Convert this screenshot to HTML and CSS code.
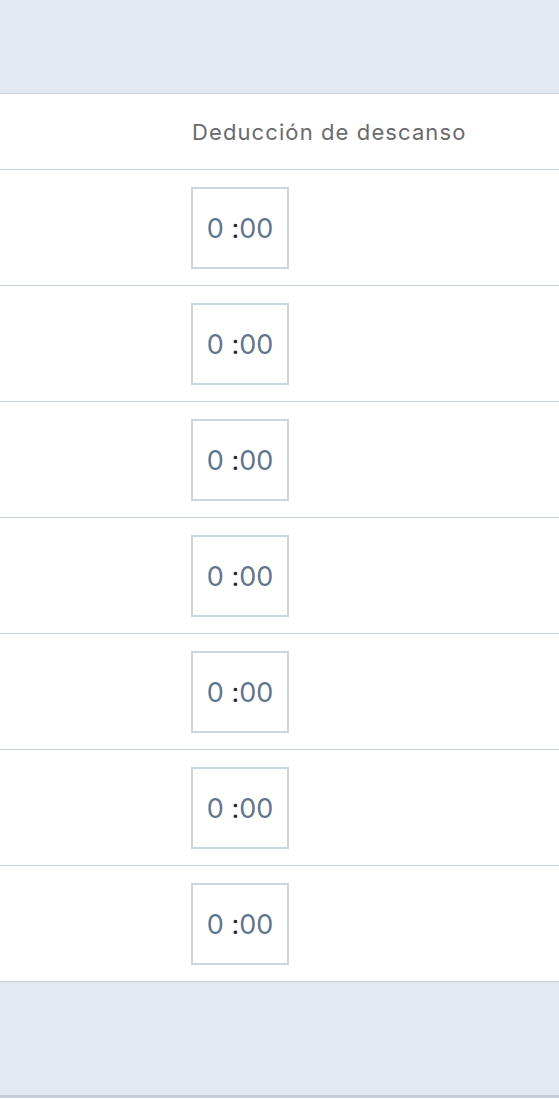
FILE: index.html
```html
<!DOCTYPE html>
<html lang="es">
<head>
<meta charset="UTF-8">
<meta name="viewport" content="width=device-width, initial-scale=1.0">
<title>Deducción de descanso</title>
<link rel="stylesheet" href="styles.css">
</head>
<body>

<div class="band band-top"></div>

<div class="table">
  <div class="row row-head">
    <div class="cell-spacer"></div>
    <div class="cell">Deducción de descanso</div>
  </div>
  <div class="row">
    <div class="cell-spacer"></div>
    <div class="cell"><div class="time-box">0 <span class="sep">:</span>00</div></div>
  </div>
  <div class="row">
    <div class="cell-spacer"></div>
    <div class="cell"><div class="time-box">0 <span class="sep">:</span>00</div></div>
  </div>
  <div class="row">
    <div class="cell-spacer"></div>
    <div class="cell"><div class="time-box">0 <span class="sep">:</span>00</div></div>
  </div>
  <div class="row">
    <div class="cell-spacer"></div>
    <div class="cell"><div class="time-box">0 <span class="sep">:</span>00</div></div>
  </div>
  <div class="row">
    <div class="cell-spacer"></div>
    <div class="cell"><div class="time-box">0 <span class="sep">:</span>00</div></div>
  </div>
  <div class="row">
    <div class="cell-spacer"></div>
    <div class="cell"><div class="time-box">0 <span class="sep">:</span>00</div></div>
  </div>
  <div class="row">
    <div class="cell-spacer"></div>
    <div class="cell"><div class="time-box">0 <span class="sep">:</span>00</div></div>
  </div>
</div>

<div class="band band-bottom"></div>

</body>
</html>
```

FILE: styles.css
```css
body {
  margin: 0;
  background-color: white;
  font-family: Inter, "Noto Sans", sans-serif;
}
.band {
  background-color: #e3e8ee;
}
.band-top {
  height: 93px;
  border-bottom: 1px solid #c6cfda;
}
.band-bottom {
  height: 113px;
  border-bottom: 3px solid #c6cfda;
}
.row {
  display: flex;
  align-items: center;
  height: 115px;
  border-bottom: 1px solid #c6cfda;
}
.row-head {
  height: 75px;
  color: #6b6b6b;
  font-size: 22px;
  letter-spacing: 1.1px;
}
.cell-spacer {
  width: 191px; /* empty first column */
}
.row-head .cell {
  padding-left: 1px;
}
.time-box {
  box-sizing: border-box;
  width: 98px;
  height: 82px;
  padding-top: 2px;
  border: 2px solid #cbd5e1;
  display: flex;
  align-items: center;
  justify-content: center;
  color: #64748b;
  font-size: 27px;
  white-space: pre;
}
.sep {
  color: #1f2937;
}
```
